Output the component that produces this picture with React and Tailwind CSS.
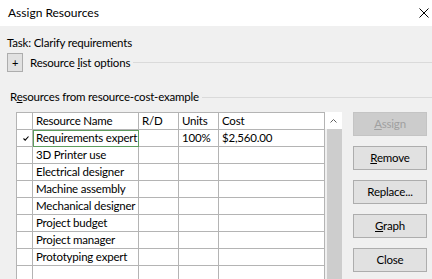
import React from "react";

const rows = [
  { name: "Requirements expert", units: "100%", cost: "$2,560.00", assigned: true },
  { name: "3D Printer use" },
  { name: "Electrical designer" },
  { name: "Machine assembly" },
  { name: "Mechanical designer" },
  { name: "Project budget" },
  { name: "Project manager" },
  { name: "Prototyping expert" },
  { name: "" },
];

const cell = "h-[17px] border-r border-b border-[#b4b4b4] pl-[3px] leading-[16px] whitespace-nowrap overflow-hidden";

const Btn = ({ children, disabled }) => (
  <button
    className={`w-[74px] h-[24px] border ${
      disabled
        ? "bg-[#cccccc] border-[#c4c4c4] text-[#a0a0a0]"
        : "bg-[#e1e1e1] border-[#adadad] text-[#000000]"
    }`}
  >
    {children}
  </button>
);

export default function App() {
  return (
    <div
      className="w-[432px] h-[279px] overflow-hidden bg-[#f0f0f0] text-[11.5px] tracking-[-0.2px] text-black"
      style={{ fontFamily: 'Lato, sans-serif' }}
    >
      {/* title bar */}
      <div className="h-[26px] bg-white flex items-center justify-between pl-[8px] pr-[3px]">
        <span className="text-[12px] tracking-normal">Assign Resources</span>
        <svg width="10" height="10" viewBox="0 0 10 10">
          <path d="M0.5 0.5 L9.5 9.5 M9.5 0.5 L0.5 9.5" stroke="#000" strokeWidth="1" />
        </svg>
      </div>

      <div className="pl-[7px]">
        <div className="pt-[9px] h-[25px] leading-[16px]">Task: Clarify requirements</div>

        <div className="flex items-center mt-[2px] h-[19px]">
          <button className="w-[16px] h-[19px] bg-[#e1e1e1] border border-[#adadad] flex items-center justify-center text-[11px] leading-none">
            +
          </button>
          <span className="ml-[7px] leading-[16px]">
            Resource <u>l</u>ist options
          </span>
          <div className="flex-1 h-px bg-[#dadada] ml-[3px]" />
        </div>

        <div className="flex items-center mt-[17px] h-[16px] pl-[3px]">
          <span className="leading-[16px]">
            R<u>e</u>sources from resource-cost-example
          </span>
          <div className="flex-1 h-px bg-[#dadada] ml-[3px]" />
        </div>

        <div className="flex mt-[7px] ml-[9px]">
          {/* table */}
          <div className="flex bg-white">
            <div className="border-l border-t border-[#b4b4b4]">
              <div className="flex">
                <div className={`${cell} w-[16px]`} />
                <div className={`${cell} w-[106px]`}>Resource Name</div>
                <div className={`${cell} w-[40px]`}>R/D</div>
                <div className={`${cell} w-[40px]`}>Units</div>
                <div className={`${cell} w-[106px]`}>Cost</div>
              </div>
              {rows.map((r, i) => (
                <div className="flex" key={i}>
                  <div className={`${cell} w-[16px] flex items-center justify-center pl-0`}>
                    {r.assigned && (
                      <svg width="6" height="5" viewBox="0 0 6 5">
                        <path d="M0.5 2.5 L2.2 4.2 L5.5 0.5" stroke="#000" strokeWidth="1.1" fill="none" />
                      </svg>
                    )}
                  </div>
                  <div
                    className={`${cell} w-[106px] ${
                      r.assigned ? "outline outline-1 outline-[#5e9c5e] -outline-offset-1" : ""
                    }`}
                  >
                    {r.name}
                  </div>
                  <div className={`${cell} w-[40px]`} />
                  <div className={`${cell} w-[40px]`}>{r.units}</div>
                  <div className={`${cell} w-[106px]`}>{r.cost}</div>
                </div>
              ))}
            </div>
            {/* scrollbar */}
            <div className="w-[17px] bg-[#f0f0f0] flex flex-col">
              <div className="h-[17px] flex items-center justify-center bg-white">
                <svg width="7" height="4" viewBox="0 0 7 4">
                  <path d="M0.5 3.5 L3.5 0.5 L6.5 3.5" stroke="#606060" strokeWidth="1" fill="none" />
                </svg>
              </div>
              <div className="flex-1 ml-[2px] bg-[#cdcdcd]" />
            </div>
          </div>

          {/* buttons */}
          <div className="flex flex-col gap-[10px] ml-[11px]">
            <Btn disabled>
              <u>A</u>ssign
            </Btn>
            <Btn>
              <u>R</u>emove
            </Btn>
            <Btn>Replace...</Btn>
            <Btn>
              <u>G</u>raph
            </Btn>
            <Btn>Close</Btn>
          </div>
        </div>
      </div>
    </div>
  );
}
